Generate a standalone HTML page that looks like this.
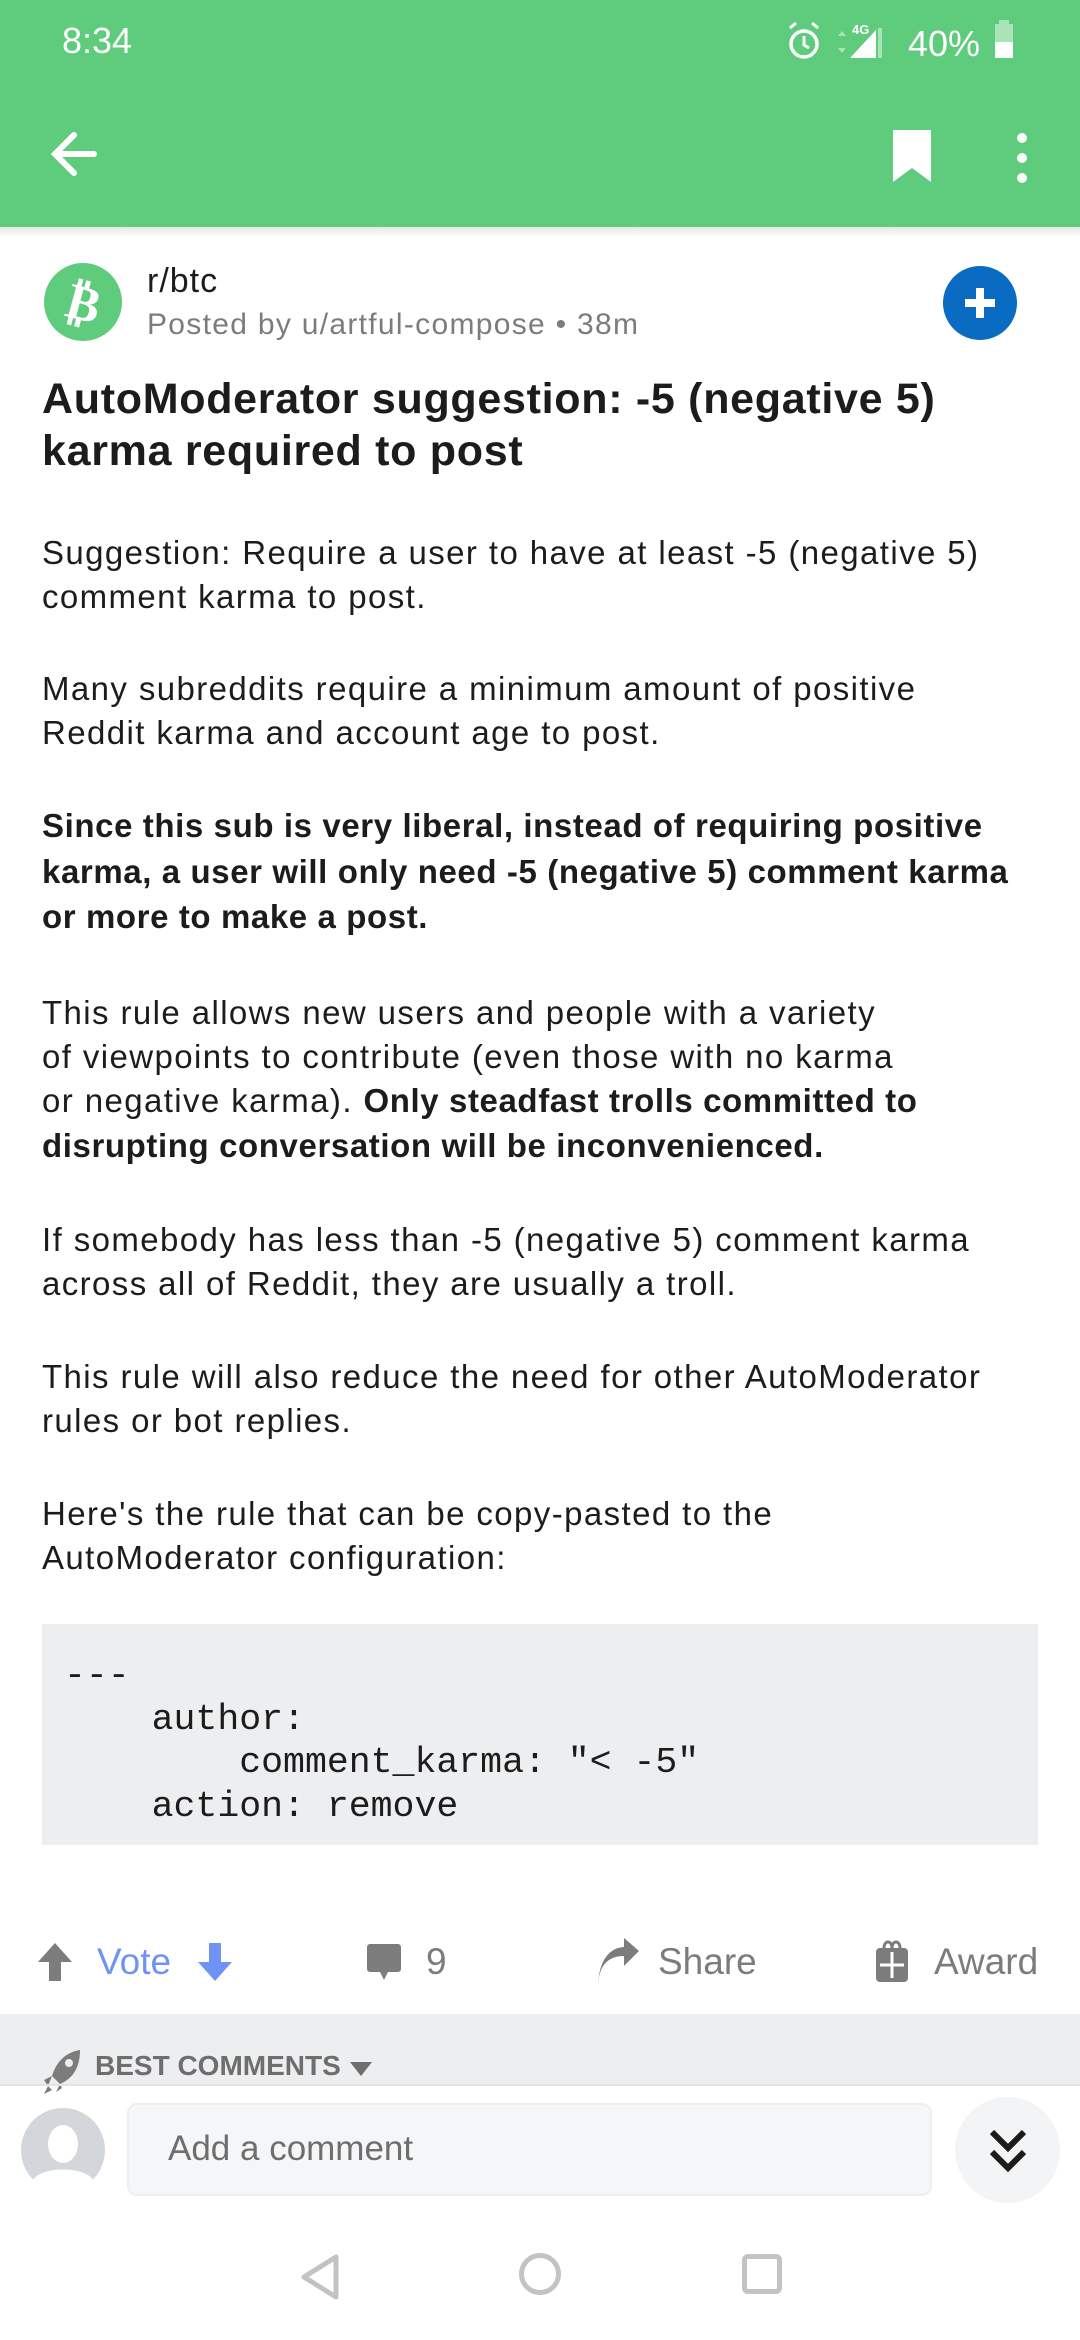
<!DOCTYPE html>
<html><head><meta charset="utf-8">
<style>
*{margin:0;padding:0;box-sizing:border-box}
body{width:1080px;height:2340px;background:#fff;font-family:"Liberation Sans",sans-serif;position:relative;overflow:hidden;color:#1c1c1c}
.abs{position:absolute}
.hdr{left:0;top:0;width:1080px;height:227px;background:#5fcb7c}
.shadow{left:0;top:227px;width:1080px;height:10px;background:linear-gradient(#e6e6e6,#fff)}
.p{position:absolute;left:42px;font-size:33px;line-height:44px;white-space:nowrap;color:#1c1c1c;letter-spacing:1.4px}
b{font-weight:bold;letter-spacing:0.6px}
.code{left:42px;top:1624px;width:996px;height:221px;background:#edeef0}
.code pre{position:absolute;left:22px;top:30px;font-family:"Liberation Mono",monospace;font-size:36.5px;line-height:43.5px;color:#1c1c1c}
.act{position:absolute;top:1940px;font-size:37px;color:#7c7c7c;line-height:44px}
</style></head><body>
<div class="abs hdr"></div>
<div class="abs shadow"></div>
<div class="abs" style="left:62px;top:20px;font-size:36px;color:#fff">8:34</div>
<svg class="abs" style="left:780px;top:18px" width="230" height="44" viewBox="0 0 230 44">
<circle cx="24" cy="26" r="13" fill="none" stroke="#fff" stroke-width="3.5"/>
<path d="M24 18v9l5 3" stroke="#fff" stroke-width="3" fill="none"/>
<path d="M10 10l6-5M38 10l-6-5" stroke="#fff" stroke-width="3"/>
<path d="M58 18l4-5 4 5zM58 30l4 5 4-5z" fill="#a9e4b8"/>
<text x="72" y="16" font-size="13" fill="#fff" font-family="Liberation Sans" font-weight="bold">4G</text>
<path d="M70 40L96 12V40Z" fill="#fff"/>
<rect x="98" y="10" width="4" height="30" fill="#a9e4b8"/>
<text x="128" y="38" font-size="36" fill="#fff" font-family="Liberation Sans">40%</text>
</svg>
<svg class="abs" style="left:993px;top:20px" width="24" height="40"><rect x="6" y="0" width="10" height="5" fill="#a9e4b8"/><rect x="2" y="4" width="18" height="34" fill="#a9e4b8"/><rect x="2" y="22" width="18" height="16" fill="#fff"/></svg>
<svg class="abs" style="left:48px;top:128px" width="52" height="52" viewBox="0 0 52 52"><path d="M46 26H8M26 7L7 26l19 19" stroke="#fff" stroke-width="6" fill="none" stroke-linecap="round"/></svg>
<svg class="abs" style="left:890px;top:130px" width="44" height="52" viewBox="0 0 44 52"><path d="M3 0H41V52L22 38 3 52Z" fill="#fff"/></svg>
<svg class="abs" style="left:1012px;top:130px" width="20" height="56"><circle cx="10" cy="8" r="5" fill="#fff"/><circle cx="10" cy="28" r="5" fill="#fff"/><circle cx="10" cy="48" r="5" fill="#fff"/></svg>
<svg class="abs" style="left:43px;top:262px" width="80" height="80" viewBox="0 0 80 80"><circle cx="40" cy="40" r="39" fill="#5fcb7c"/><text x="41" y="58" text-anchor="middle" font-size="50" font-weight="bold" fill="#fff" font-family="DejaVu Sans" transform="rotate(15 40 40)">₿</text></svg>
<div class="abs" style="left:147px;top:262px;font-size:34px;color:#1c1c1c;letter-spacing:1px">r/btc</div>
<div class="abs" style="left:147px;top:308px;font-size:30px;color:#7c7c7c;letter-spacing:1.3px">Posted by u/artful-compose • 38m</div>
<svg class="abs" style="left:943px;top:266px" width="74" height="74"><circle cx="37" cy="37" r="37" fill="#0a6bc2"/><path d="M37 22v30M22 37h30" stroke="#fff" stroke-width="8"/></svg>
<div class="abs" style="left:42px;top:373px;font-size:43px;line-height:52px;font-weight:bold;color:#1c1c1c;white-space:nowrap;letter-spacing:0.7px">AutoModerator suggestion: -5 (negative 5)<br>karma required to post</div>
<div class="p" style="top:531px">Suggestion: Require a user to have at least -5 (negative 5)<br>comment karma to post.</div>
<div class="p" style="top:667px">Many subreddits require a minimum amount of positive<br>Reddit karma and account age to post.</div>
<div class="p" style="top:803px;line-height:45.5px"><b>Since this sub is very liberal, instead of requiring positive<br>karma, a user will only need -5 (negative 5) comment karma<br>or more to make a post.</b></div>
<div class="p" style="top:991px;line-height:44px">This rule allows new users and people with a variety<br>of viewpoints to contribute (even those with no karma<br>or negative karma). <b>Only steadfast trolls committed to</b></div>
<div class="p" style="top:1124px"><b>disrupting conversation will be inconvenienced.</b></div>
<div class="p" style="top:1218px">If somebody has less than -5 (negative 5) comment karma<br>across all of Reddit, they are usually a troll.</div>
<div class="p" style="top:1355px">This rule will also reduce the need for other AutoModerator<br>rules or bot replies.</div>
<div class="p" style="top:1492px">Here's the rule that can be copy-pasted to the<br>AutoModerator configuration:</div>
<div class="abs code"><pre>---
    author:
        comment_karma: "&lt; -5"
    action: remove</pre></div>
<svg class="abs" style="left:36px;top:1942px" width="38" height="40" viewBox="0 0 38 40"><path d="M19 1L2 20h11v19h12V20h11z" fill="#7c7c7c"/></svg>
<div class="act" style="left:97px;color:#6f93f5">Vote</div>
<svg class="abs" style="left:196px;top:1942px" width="38" height="40" viewBox="0 0 38 40"><path d="M19 39L2 20h11V1h12v19h11z" fill="#6f93f5"/></svg>
<svg class="abs" style="left:367px;top:1944px" width="34" height="38" viewBox="0 0 34 38"><path d="M3 0h28a3 3 0 0 1 3 3v22a3 3 0 0 1-3 3H21l-4 8-4-8H3a3 3 0 0 1-3-3V3a3 3 0 0 1 3-3z" fill="#7c7c7c"/></svg>
<div class="act" style="left:426px">9</div>
<svg class="abs" style="left:596px;top:1938px" width="44" height="50" viewBox="0 0 44 50"><path d="M2 50C2 30 10 18 28 18V28L43 13 28 0v9C10 10 2 28 2 50z" fill="#7c7c7c"/></svg>
<div class="act" style="left:658px">Share</div>
<svg class="abs" style="left:876px;top:1940px" width="32" height="44" viewBox="0 0 32 44"><rect x="0" y="8" width="32" height="34" rx="4" fill="#7c7c7c"/><path d="M16 12v26M4 25h24" stroke="#fff" stroke-width="3"/><path d="M8 8c0-8 8-8 8 0c0-8 8-8 8 0" stroke="#7c7c7c" stroke-width="3" fill="none"/></svg>
<div class="act" style="left:934px">Award</div>
<div class="abs" style="left:0;top:2014px;width:1080px;height:70px;background:#edeef0"></div>
<svg class="abs" style="left:42px;top:2050px" width="40" height="46" viewBox="0 0 40 46"><path d="M38 0C24 2 14 12 10 26l8 8C32 28 38 16 38 0z" fill="#7c7c7c"/><path d="M10 26L2 30l4 6zM18 34l-4 8 6-4zM6 36l-4 8 8-4z" fill="#7c7c7c"/><circle cx="27" cy="13" r="4" fill="#edeef0"/></svg>
<div class="abs" style="left:95px;top:2050px;font-size:28px;font-weight:bold;color:#6e6e6e">BEST COMMENTS</div>
<svg class="abs" style="left:350px;top:2062px" width="22" height="16"><path d="M0 0h22L11 14z" fill="#6e6e6e"/></svg>
<div class="abs" style="left:0;top:2084px;width:1080px;height:2px;background:#e4e4e4"></div>
<svg class="abs" style="left:21px;top:2108px" width="84" height="84" viewBox="0 0 84 84"><circle cx="42" cy="42" r="42" fill="#d3d6da"/><ellipse cx="42" cy="36" rx="15" ry="19" fill="#fff"/><path d="M12 72c8-14 52-14 60 0a42 42 0 0 1-60 0z" fill="#fff"/></svg>
<div class="abs" style="left:127px;top:2103px;width:805px;height:93px;background:#f5f6f8;border:2px solid #eceef0;border-radius:10px"></div>
<div class="abs" style="left:168px;top:2129px;font-size:35px;color:#6e6e6e">Add a comment</div>
<div class="abs" style="left:955px;top:2097px;width:105px;height:106px;border-radius:50%;background:#f3f4f5"></div>
<svg class="abs" style="left:988px;top:2128px" width="40" height="46" viewBox="0 0 40 46"><path d="M4 4l16 16L36 4M4 24l16 16 16-16" stroke="#1c1c1c" stroke-width="6" fill="none"/></svg>
<svg class="abs" style="left:296px;top:2252px" width="50" height="50" viewBox="0 0 50 50"><path d="M40 5L8 25l32 20z" stroke="#c3c3c3" stroke-width="5" fill="none" stroke-linejoin="round"/></svg>
<div class="abs" style="left:519px;top:2253px;width:42px;height:42px;border:5px solid #c3c3c3;border-radius:50%"></div>
<div class="abs" style="left:742px;top:2254px;width:40px;height:40px;border:5px solid #c3c3c3;border-radius:6px"></div>
</body></html>
